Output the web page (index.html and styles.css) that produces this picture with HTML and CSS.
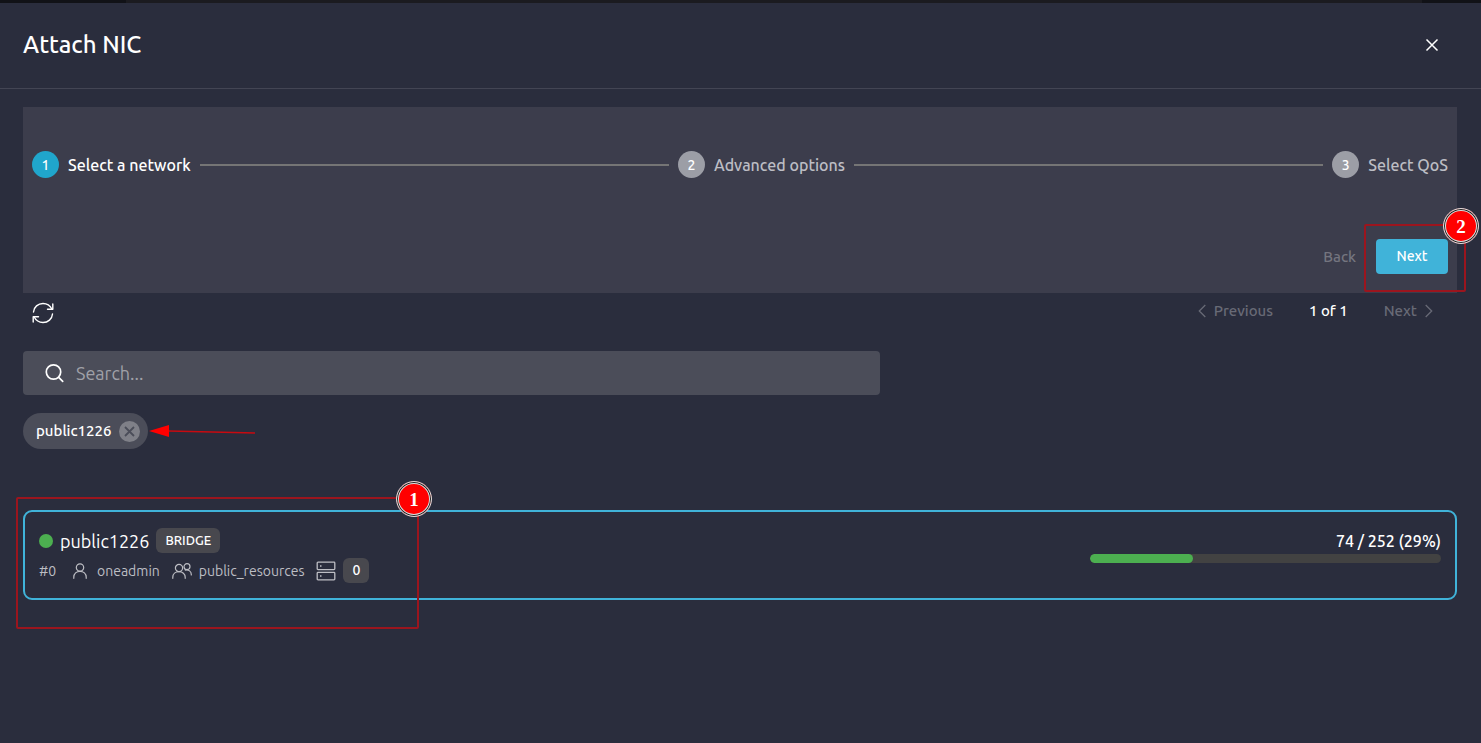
FILE: index.html
```html
<!DOCTYPE html>
<html lang="en">
<head>
    <meta charset="UTF-8">
    <meta name="viewport" content="width=device-width, initial-scale=1.0">
    <title>Attach NIC</title>
    <link rel="stylesheet" href="styles.css">
</head>
<body>
    <div class="topbar"><div class="topbar-inner"></div></div>

    <!-- Dialog header -->
    <header class="dialog-header">
        <h1>Attach NIC</h1>
        <button type="button" class="icon-button" aria-label="Close">
            <svg width="14" height="14" viewBox="0 0 14 14" fill="none" stroke="currentColor" stroke-width="1.5"><path d="M1.5 1.5l11 11M12.5 1.5l-11 11"/></svg>
        </button>
    </header>

    <main class="dialog-body">
        <!-- Stepper -->
        <section class="stepper">
            <ol class="steps">
                <li class="step active"><span class="step-number">1</span>Select a network</li>
                <li class="step-line" aria-hidden="true"></li>
                <li class="step"><span class="step-number">2</span>Advanced options</li>
                <li class="step-line" aria-hidden="true"></li>
                <li class="step"><span class="step-number">3</span>Select QoS</li>
            </ol>
            <div class="step-actions">
                <button type="button" class="back-button" disabled>Back</button>
                <div class="next-wrap">
                    <button type="button" class="next-button">Next</button>
                    <div class="mark mark-next"><span class="mark-number">2</span></div>
                </div>
            </div>
        </section>

        <!-- Refresh and pagination -->
        <div class="toolbar">
            <button type="button" class="icon-button" aria-label="Refresh">
                <svg width="22" height="22" viewBox="0 0 22 22" fill="none" stroke="currentColor" stroke-width="1.4" stroke-linecap="round" stroke-linejoin="round">
                    <path d="M1.5 10C1.9 5 6 1.5 11 1.5c4 0 7.2 2.200 9 5.700M20.500 12C20.100 17 16 20.500 11 20.500c-4 0-7.200-2.200-9-5.700"/>
                    <path d="M20.800 2v5.300h-5.300M1.200 20v-5.300h5.300"/>
                </svg>
            </button>
            <nav class="pagination">
                <button type="button" disabled>
                    <svg width="8" height="14" viewBox="0 0 8 14" fill="none" stroke="currentColor" stroke-width="1.3"><path d="M7.300 1L1.300 7l6 6"/></svg>
                    Previous
                </button>
                <span class="page-count">1 of 1</span>
                <button type="button" disabled>
                    Next
                    <svg width="8" height="14" viewBox="0 0 8 14" fill="none" stroke="currentColor" stroke-width="1.3"><path d="M.7 1l6 6-6 6"/></svg>
                </button>
            </nav>
        </div>

        <!-- Search -->
        <label class="search">
            <svg width="19" height="20" viewBox="0 0 19 20" fill="none" stroke="currentColor" stroke-width="1.7" stroke-linecap="round"><circle cx="8.500" cy="9" r="7.200"/><path d="M13.700 14.300l4 4"/></svg>
            <input type="text" placeholder="Search..." aria-label="Search">
        </label>

        <div class="chips">
            <span class="chip">
                public1226
                <button type="button" class="chip-remove" aria-label="Remove public1226">
                    <svg width="21" height="21" viewBox="0 0 21 21"><circle cx="10.500" cy="10.500" r="10.500" fill="#7f8088"/><path d="M6 6l9 9M15 6l-9 9" stroke="#4b4d59" stroke-width="1.8" fill="none"/></svg>
                </button>
                <svg class="arrow" width="108" height="14" viewBox="0 0 108 14"><path d="M20 7l86 2" stroke="#c80a10" stroke-width="1.500"/><path d="M0 7l20-6v12z" fill="#f00"/></svg>
            </span>
        </div>

        <!-- Network row -->
        <article class="network">
            <div class="network-info">
                <div class="network-title">
                    <span class="status"></span>
                    <h2>public1226</h2>
                    <span class="tag">BRIDGE</span>
                </div>
                <div class="network-meta">
                    <span class="network-id">#0</span>
                    <span class="meta-item meta-owner">
                        <svg width="14" height="16" viewBox="0 0 14 16" fill="none" stroke="currentColor" stroke-width="1.2" stroke-linecap="round"><circle cx="7" cy="4.500" r="3.700"/><path d="M.8 15.300v-1.200c0-3.500 2.700-5.800 6.200-5.800s6.200 2.300 6.200 5.800v1.200"/></svg>
                        oneadmin
                    </span>
                    <span class="meta-item">
                        <svg width="20" height="16" viewBox="0 0 20 16" fill="none" stroke="currentColor" stroke-width="1.2" stroke-linecap="round"><circle cx="7" cy="5" r="3.600"/><path d="M.8 15.300v-1c0-3.300 2.700-5.600 6.200-5.600s6.200 2.300 6.200 5.600v1"/><circle cx="15" cy="3.700" r="3"/><path d="M13.300 7.200c3.400-.8 6 1.200 6 4.300v.5"/></svg>
                        public_resources
                    </span>
                    <span class="meta-item">
                        <svg width="20" height="20" viewBox="0 0 20 20" fill="none" stroke="currentColor" stroke-width="1.3"><rect x="1.200" y="1.200" width="17.600" height="7.400" rx=".8"/><rect x="1.200" y="11.400" width="17.600" height="7.400" rx=".8"/><path d="M4 5h1.500M4 15h1.500"/></svg>
                        <span class="tag tag-count">0</span>
                    </span>
                </div>
            </div>
            <div class="usage">
                <span id="usageLabel">74 / 252 (29%)</span>
                <div class="usage-bar" role="progressbar" aria-labelledby="usageLabel" aria-valuenow="74" aria-valuemax="252">
                    <div class="usage-fill" style="width: 29.4%"></div>
                </div>
            </div>
            <div class="mark mark-network"><span class="mark-number">1</span></div>
        </article>
    </main>
</body>
</html>
```

FILE: styles.css
```css
* {
    box-sizing: border-box;
}

body {
    margin: 0;
    min-height: 100vh;
    background-color: #2a2d3d;
    color: #fff;
    font-family: Ubuntu, "Noto Sans", sans-serif;
    font-size: 15px;
    font-weight: 500;
    line-height: 20px;
}

h1, h2 {
    margin: 0;
    font-weight: 500;
}

button {
    padding: 0;
    border: none;
    background: none;
    color: inherit;
    font: inherit;
    cursor: pointer;
}

svg {
    display: block;
    flex: none;
}

.topbar {
    height: 3px;
    padding: 0 59px 0 126px;
    background-color: #111217;
}

.topbar-inner {
    height: 100%;
    background-color: #1b1b20;
}

.dialog-header {
    display: flex;
    align-items: center;
    justify-content: space-between;
    height: 86px;
    padding: 0 42px 2px 23px;
    border-bottom: 1px solid #434554;
}

.dialog-header h1 {
    font-size: 24px;
    line-height: 32px;
}

.icon-button {
    display: flex;
}

.dialog-body {
    padding: 18px 24px 24px 23px;
}

/* Stepper */
.stepper {
    padding: 44px 9px 19px;
    background-color: #3c3d4c;
}

.steps {
    display: flex;
    align-items: center;
    gap: 9px;
    margin: 0 0 61px;
    padding: 0;
    list-style: none;
}

.step {
    display: flex;
    align-items: center;
    gap: 9px;
    color: #bdbec4;
    font-size: 16px;
    white-space: nowrap;
}

.step.active {
    color: #fff;
}

.step-number {
    display: flex;
    align-items: center;
    justify-content: center;
    width: 27px;
    height: 27px;
    border-radius: 50%;
    background-color: #9c9ea6;
    color: #fff;
    font-size: 14px;
}

.active .step-number {
    background-color: #20a6cc;
}

.step-line {
    flex: 1;
    height: 2px;
    background-color: #757575;
}

.step-actions {
    display: flex;
    align-items: center;
    justify-content: flex-end;
    gap: 20px;
}

.back-button {
    color: #74757f;
}

.next-wrap {
    position: relative;
}

.next-button {
    display: block;
    width: 72px;
    height: 35px;
    padding-bottom: 2px;
    border-radius: 4px;
    background-color: #40b3d9;
    font-size: 14px;
}

/* Refresh and pagination */
.toolbar {
    display: flex;
    align-items: center;
    justify-content: space-between;
    height: 40px;
    padding: 0 24px 0 9px;
}

.pagination {
    display: flex;
    align-items: center;
    gap: 36px;
    padding-bottom: 4px;
}

.pagination button {
    display: flex;
    align-items: center;
    gap: 8px;
    color: #686a76;
}

/* Search */
.search {
    display: flex;
    align-items: center;
    gap: 12px;
    width: calc(60% - 3px);
    height: 44px;
    margin-top: 18px;
    padding: 0 22px;
    border-radius: 4px;
    background-color: #4b4d59;
}

.search input {
    flex: 1;
    min-width: 0;
    padding: 0;
    border: none;
    outline: none;
    background: none;
    color: #fff;
    font: inherit;
    font-size: 18px;
    font-weight: 400;
}

.search input::placeholder {
    color: #a0a1a8;
}

.chips {
    display: flex;
    margin-top: 18px;
}

.chip {
    position: relative;
    display: flex;
    align-items: center;
    gap: 8px;
    height: 36px;
    padding: 0 8px 0 13px;
    border-radius: 18px;
    background-color: #4b4d59;
}

.arrow {
    position: absolute;
    top: 11px;
    left: calc(100% + 1px);
}

/* Network row */
.network {
    position: relative;
    display: flex;
    justify-content: space-between;
    margin-top: 61px;
    padding: 16px 14px 15px;
    border: 2px solid #40b3d9;
    border-radius: 9px;
}

.network-title,
.network-meta,
.meta-item {
    display: flex;
    align-items: center;
}

.network-title {
    gap: 7px;
}

.network-title h2 {
    font-size: 18px;
    font-weight: 400;
    line-height: 24px;
}

.status {
    width: 14px;
    height: 14px;
    border-radius: 50%;
    background-color: #4caf50;
}

.tag {
    padding: 0 9px;
    border-radius: 6px;
    background-color: #48484e;
    color: #fff;
    font-size: 13px;
    line-height: 25px;
}

.network-meta {
    gap: 12px;
    margin-top: 5px;
    color: #bdbec4;
    font-size: 14px;
    font-weight: 400;
}

.network-id {
    min-width: 22px;
}

.meta-item {
    gap: 7px;
}

.meta-owner {
    gap: 10px;
}

.tag-count {
    font-size: 14px;
    font-weight: 500;
}

.usage {
    width: 351px;
    padding-top: 3px;
    font-size: 16px;
    text-align: right;
}

.usage-bar {
    height: 9px;
    margin-top: 3px;
    border-radius: 5px;
    background-color: #424242;
    overflow: hidden;
}

.usage-fill {
    height: 100%;
    border-radius: 5px;
    background-color: #4caf50;
}

/* Numbered red outlines */
.mark {
    position: absolute;
    border: 2px solid #9b151e;
    border-radius: 2px;
    pointer-events: none;
}

.mark-next {
    inset: -15px -18px -18px -12px;
}

.mark-network {
    top: -15px;
    bottom: -31px;
    left: -9px;
    width: 403px;
}

.mark-number {
    position: absolute;
    top: -18px;
    right: -15px;
    width: 36px;
    height: 36px;
    border: 1px solid #ddd;
    border-radius: 50%;
    background-color: #f00;
    box-shadow: inset 0 0 0 1px #222, inset 0 0 0 2px #ddd;
    font: bold 19px/36px "Liberation Serif", serif;
    text-align: center;
}
```
